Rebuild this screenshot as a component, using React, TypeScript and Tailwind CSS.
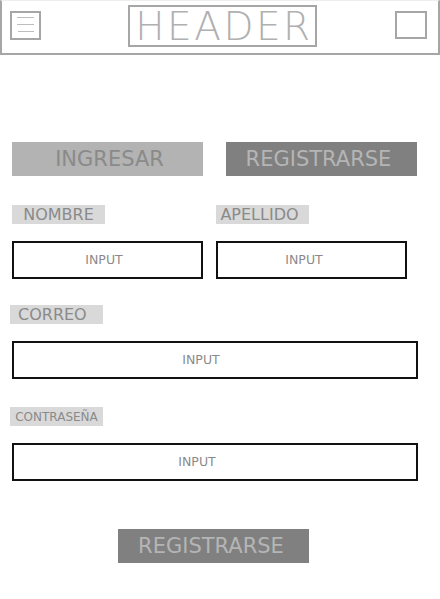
import React from "react";

const font = { fontFamily: '"DejaVu Sans", "Open Sans", sans-serif' };

function Label({ text, className }: { text: string; className: string }) {
  return (
    <div className={`h-[19px] w-[93px] bg-[#d9d9d9] flex items-center text-[#8a8a8a] leading-none ${className}`}>
      {text}
    </div>
  );
}

function Input({ className, shift }: { className: string; shift: string }) {
  return (
    <div className={`h-[38px] border-2 border-[#111] flex items-center justify-center text-[12.5px] text-[#8a8a8a] leading-none ${className}`}>
      <span className={shift}>INPUT</span>
    </div>
  );
}

export default function App() {
  return (
    <div className="w-[440px] h-[599px] bg-white flex flex-col" style={font}>
      <div className="h-[55px] border-t border-t-[#eeeeee] border-x-2 border-x-[#a6a6a6] border-b-2 border-b-[#a6a6a6] flex items-start">
        <div className="ml-[8px] mt-[10px] w-[31px] h-[29px] border-2 border-[#a6a6a6] flex flex-col items-end pr-[5px] pt-[4px] gap-[6px]">
          <div className="w-[17px] h-px bg-[#bdbdbd]" />
          <div className="w-[17px] h-px bg-[#bdbdbd]" />
          <div className="w-[16px] h-px bg-[#bdbdbd]" />
        </div>
        <div className="ml-[87px] mt-[4px] w-[189px] h-[42px] border-2 border-[#a6a6a6] flex items-center justify-center text-[39px] font-extralight text-[#b0b0b0] leading-none tracking-[2.5px]">
          <span className="pl-[3px] pt-[1px]">HEADER</span>
        </div>
        <div className="ml-auto mr-[11px] mt-[10px] w-[32px] h-[28px] border-2 border-[#a6a6a6]" />
      </div>

      <div className="mt-[87px] flex h-[34px]">
        <div className="ml-[12px] w-[191px] bg-[#b3b3b3] flex items-center justify-center text-[21px] text-[#8a8a8a] leading-none">
          <span className="pl-[4px]">INGRESAR</span>
        </div>
        <div className="ml-[23px] w-[191px] bg-[#808080] flex items-center justify-center text-[21px] text-[#b5b5b5] leading-none">
          <span className="pr-[6px]">REGISTRARSE</span>
        </div>
      </div>

      <div className="mt-[29px] flex">
        <Label text="NOMBRE" className="ml-[12px] justify-center text-[16px]" />
        <Label text="APELLIDO" className="ml-[111px] justify-center text-[16px] pr-[6px]" />
      </div>

      <div className="mt-[17px] flex">
        <Input className="ml-[12px] w-[191px]" shift="pr-[7px]" />
        <Input className="ml-[13px] w-[191px]" shift="pr-[15px]" />
      </div>

      <div className="mt-[26px] flex">
        <Label text="CORREO" className="ml-[10px] pl-[8px] text-[16px]" />
      </div>

      <div className="mt-[17px] flex">
        <Input className="ml-[12px] w-[406px]" shift="pr-[28px]" />
      </div>

      <div className="mt-[28px] flex">
        <Label text="CONTRASEÑA" className="ml-[10px] justify-center text-[12px]" />
      </div>

      <div className="mt-[17px] flex">
        <Input className="ml-[12px] w-[406px]" shift="pr-[36px]" />
      </div>

      <div className="mt-[48px] flex h-[34px]">
        <div className="ml-[118px] w-[191px] bg-[#808080] flex items-center justify-center text-[21px] text-[#b5b5b5] leading-none">
          <span className="pr-[5px]">REGISTRARSE</span>
        </div>
      </div>
    </div>
  );
}
